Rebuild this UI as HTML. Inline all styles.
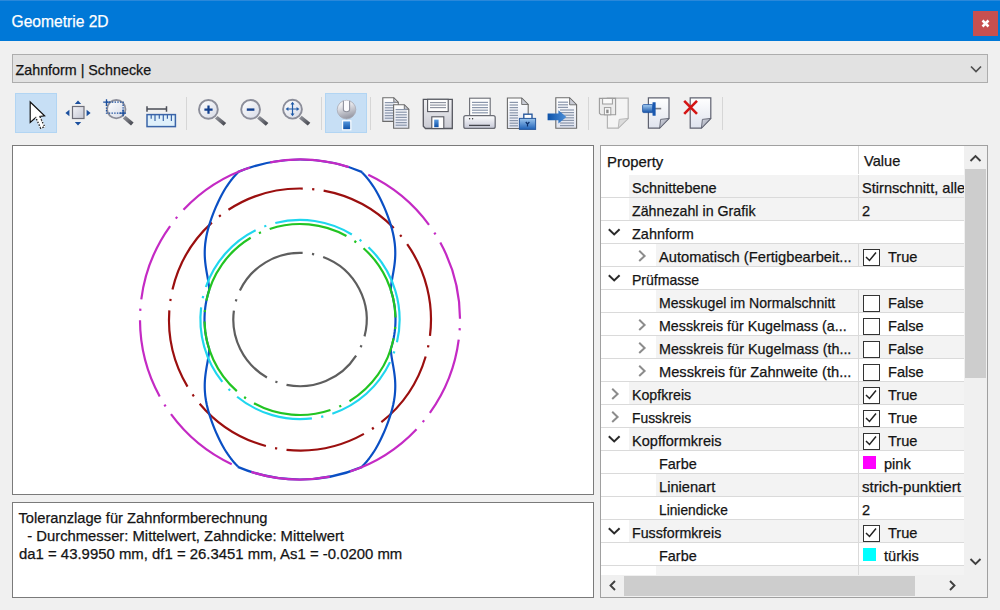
<!DOCTYPE html>
<html><head><meta charset="utf-8">
<style>
*{margin:0;padding:0;box-sizing:border-box}
html,body{width:1000px;height:610px;overflow:hidden;background:#f0f0f0;font-family:"Liberation Sans", sans-serif;font-size:14.6px;color:#141414;position:relative}
.abs{position:absolute}
.t{position:absolute;white-space:nowrap;line-height:17px;-webkit-text-stroke:0.25px currentColor}
.shd{position:absolute}
.hl{position:absolute;height:1px;background:#dadada}
.vl{position:absolute;width:1px;background:#dadada}
</style></head><body>
<div class="abs" style="left:0;top:0;width:1000px;height:41px;background:#0078d7;border-top:1px solid #2a88da"></div>
<div class="t" style="left:11.5px;top:12px;color:#fff;font-size:15.6px;line-height:19px">Geometrie 2D</div>
<div class="abs" style="left:973px;top:11px;width:25px;height:25px;background:#c75050"></div>
<svg class="abs" style="left:973px;top:11px" width="25" height="25"><path d="M9.5,9.5 L15.5,15.5 M15.5,9.5 L9.5,15.5" stroke="#fff" stroke-width="2.5"/></svg>

<div class="abs" style="left:12px;top:54px;width:976px;height:29px;background:#e2e2e2;border:1px solid #adadad"></div>
<div class="t" style="left:15.5px;top:61.5px;font-size:14.3px">Zahnform | Schnecke</div>
<svg class="abs" style="left:969.5px;top:64.5px" width="13" height="9"><path d="M1,1.5 L6,6.5 L11,1.5" stroke="#505050" stroke-width="1.7" fill="none"/></svg>

<svg width="1000" height="140" viewBox="0 0 1000 140" style="position:absolute;left:0;top:0"><defs>
<linearGradient id="docg" x1="0" y1="0" x2="0" y2="1"><stop offset="0" stop-color="#ffffff"/><stop offset="1" stop-color="#dfe3ee"/></linearGradient>
<linearGradient id="lens" x1="0" y1="0" x2="1" y2="1"><stop offset="0" stop-color="#ffffff"/><stop offset="1" stop-color="#d6dae6"/></linearGradient>
<linearGradient id="graybox" x1="0" y1="0" x2="1" y2="1"><stop offset="0" stop-color="#f4f4f8"/><stop offset="1" stop-color="#c4c6d2"/></linearGradient>
<linearGradient id="handle" x1="0" y1="0" x2="1" y2="1"><stop offset="0" stop-color="#9a9ca4"/><stop offset="1" stop-color="#3c3e46"/></linearGradient>
<linearGradient id="blueg" x1="0" y1="0" x2="0" y2="1"><stop offset="0" stop-color="#5a9be0"/><stop offset="1" stop-color="#0b4ea6"/></linearGradient>
<linearGradient id="blueh" x1="0" y1="0" x2="1" y2="0"><stop offset="0" stop-color="#0d52a8"/><stop offset="1" stop-color="#4d8fd8"/></linearGradient>
<linearGradient id="magg" x1="0.2" y1="0" x2="0.5" y2="1"><stop offset="0" stop-color="#ffffff"/><stop offset="0.35" stop-color="#e2e3e8"/><stop offset="1" stop-color="#9496a2"/></linearGradient>
<linearGradient id="floppy" x1="0" y1="0" x2="0" y2="1"><stop offset="0" stop-color="#f2f2f4"/><stop offset="1" stop-color="#c9cad3"/></linearGradient>
<linearGradient id="printer" x1="0" y1="0" x2="0" y2="1"><stop offset="0" stop-color="#ffffff"/><stop offset="1" stop-color="#c5c7d6"/></linearGradient>
<linearGradient id="curlg" x1="0" y1="0" x2="1" y2="1"><stop offset="0" stop-color="#d8dbe4"/><stop offset="1" stop-color="#8d91a0"/></linearGradient><linearGradient id="lockg" x1="0" y1="0" x2="0" y2="1"><stop offset="0" stop-color="#9cc6ee"/><stop offset="1" stop-color="#1f62b8"/></linearGradient><linearGradient id="ping" x1="0" y1="0" x2="0" y2="1"><stop offset="0" stop-color="#a8d0f4"/><stop offset="1" stop-color="#1452a8"/></linearGradient></defs><rect x="15.5" y="93.5" width="41" height="39" fill="#c7dff5" stroke="#b2d5f3" stroke-width="1"/><rect x="325.5" y="93.5" width="41" height="39" fill="#c7dff5" stroke="#b2d5f3" stroke-width="1"/><line x1="186.5" y1="97" x2="186.5" y2="130" stroke="#d6d6d6" stroke-width="1"/><line x1="321.5" y1="97" x2="321.5" y2="130" stroke="#d6d6d6" stroke-width="1"/><line x1="370.5" y1="97" x2="370.5" y2="130" stroke="#d6d6d6" stroke-width="1"/><line x1="588.5" y1="97" x2="588.5" y2="130" stroke="#d6d6d6" stroke-width="1"/><line x1="722.5" y1="97" x2="722.5" y2="130" stroke="#d6d6d6" stroke-width="1"/><path d="M30.2,102 L30.2,122.5 L35.8,117.6 L40.6,128.2 L44.6,126.6 L39.8,116.4 L44.6,115.8 Z" fill="#fff" stroke="#111" stroke-width="1.2" stroke-linejoin="miter"/><path d="M35.8,117.6 L40.6,128.2 L44.6,126.6 L39.8,116.4" fill="none" stroke="#fff" stroke-width="1.5" stroke-dasharray="1.5,1.5"/><rect x="72.5" y="106.5" width="11.5" height="12" fill="url(#graybox)" stroke="#6e6e78" stroke-width="1.2"/><path d="M74.8,104 L78,100.6 L81.2,104 Z M74.8,122 L78,125.6 L81.2,122 Z M69.4,109.8 L65.4,113 L69.4,116.2 Z M86.6,109.8 L90.6,113 L86.6,116.2 Z" fill="#1b4f9e"/><path d="M122.8,118.4 L125.5,115.7 L133.6,122.6 L131,125.4 Z" fill="url(#handle)"/><circle cx="116.3" cy="109.2" r="9.2" fill="url(#lens)" stroke="#8c8e9a" stroke-width="1.8"/><rect x="106.5" y="102.2" width="16.6" height="11" fill="none" stroke="#1b4f9e" stroke-width="1.3" stroke-dasharray="1.4,1.3"/><path d="M103.2,102.2 L110,102.2 M106.5,99.2 L106.5,106 M119.5,113.2 L126,113.2 M123.1,109.5 L123.1,116.2" stroke="#1b4f9e" stroke-width="1.3"/><path d="M147,109 L166.5,109 M147,106.2 L147,111.8 M166.5,106.2 L166.5,111.8" stroke="#4a4c56" stroke-width="1.5"/><rect x="147" y="114.6" width="28.4" height="12" fill="#dff0fb" stroke="#3a64a8" stroke-width="1.5"/><line x1="151.2" y1="115" x2="151.2" y2="118.8" stroke="#3a64a8" stroke-width="1.2"/><line x1="155" y1="115" x2="155" y2="121" stroke="#3a64a8" stroke-width="1.2"/><line x1="159.3" y1="115" x2="159.3" y2="118.8" stroke="#3a64a8" stroke-width="1.2"/><line x1="163.3" y1="115" x2="163.3" y2="121" stroke="#3a64a8" stroke-width="1.2"/><line x1="167.4" y1="115" x2="167.4" y2="118.8" stroke="#3a64a8" stroke-width="1.2"/><line x1="171.4" y1="115" x2="171.4" y2="121" stroke="#3a64a8" stroke-width="1.2"/><path d="M214.9,118.60000000000001 L217.6,115.9 L226.20000000000002,123.0 L223.6,125.80000000000001 Z" fill="url(#handle)"/><circle cx="208.4" cy="109.4" r="9.4" fill="url(#lens)" stroke="#8c8e9a" stroke-width="1.9"/><path d="M204.4,109.6 L212.6,109.6 M208.5,105.5 L208.5,113.7" stroke="#123f8e" stroke-width="2.2"/><path d="M257.1,118.60000000000001 L259.8,115.9 L268.4,123.0 L265.8,125.80000000000001 Z" fill="url(#handle)"/><circle cx="250.6" cy="109.4" r="9.4" fill="url(#lens)" stroke="#8c8e9a" stroke-width="1.9"/><path d="M246.8,109.6 L254.4,109.6" stroke="#123f8e" stroke-width="2.4"/><path d="M299.0,118.4 L301.7,115.7 L310.3,122.8 L307.7,125.6 Z" fill="url(#handle)"/><circle cx="292.5" cy="109.2" r="9.4" fill="url(#lens)" stroke="#8c8e9a" stroke-width="1.9"/><path d="M287,109 L298,109 M292.5,103.5 L292.5,114.5" stroke="#1f5aa8" stroke-width="1.2"/><path d="M285.6,109 L288.4,107 L288.4,111 Z M299.4,109 L296.6,107 L296.6,111 Z M292.5,101.8 L290.5,104.6 L294.5,104.6 Z M292.5,116.2 L290.5,113.4 L294.5,113.4 Z" fill="#1f5aa8"/><circle cx="346.5" cy="109.6" r="9.3" fill="url(#magg)" stroke="#a8aab4" stroke-width="0.8"/><path d="M343.4,100.8 L343.4,109.6 Q343.4,111.8 346.5,111.8 Q349.6,111.8 349.6,109.6 L349.6,100.8" fill="#fbfbfd" stroke="#8e909c" stroke-width="1.1"/><rect x="342.6" y="120.8" width="8.2" height="9" fill="url(#blueg)" stroke="#fff" stroke-width="1.2"/><path d="M382.8,97.8 L393.8,97.8 L398.3,102.3 L398.3,121.4 L382.8,121.4 Z" fill="url(#docg)" stroke="#6b6b6b" stroke-width="1.1"/><path d="M393.8,97.8 L393.8,102.3 L398.3,102.3 Z" fill="#c9ccd6" stroke="#6b6b6b" stroke-width="0.9"/><line x1="384.8" y1="102.6" x2="394.5" y2="102.6" stroke="#8a96ab" stroke-width="1.2"/><line x1="384.8" y1="105.2" x2="394.5" y2="105.2" stroke="#8a96ab" stroke-width="1.2"/><line x1="384.8" y1="107.8" x2="394.5" y2="107.8" stroke="#8a96ab" stroke-width="1.2"/><line x1="384.8" y1="110.4" x2="394.5" y2="110.4" stroke="#8a96ab" stroke-width="1.2"/><line x1="384.8" y1="113" x2="394.5" y2="113" stroke="#8a96ab" stroke-width="1.2"/><line x1="384.8" y1="115.6" x2="394.5" y2="115.6" stroke="#8a96ab" stroke-width="1.2"/><line x1="384.8" y1="118.2" x2="394.5" y2="118.2" stroke="#8a96ab" stroke-width="1.2"/><path d="M393.6,104.8 L404.3,104.8 L408.8,109.3 L408.8,128.2 L393.6,128.2 Z" fill="url(#docg)" stroke="#6b6b6b" stroke-width="1.1"/><path d="M404.3,104.8 L404.3,109.3 L408.8,109.3 Z" fill="#c9ccd6" stroke="#6b6b6b" stroke-width="0.9"/><line x1="395.6" y1="109.6" x2="406.8" y2="109.6" stroke="#8a96ab" stroke-width="1.2"/><line x1="395.6" y1="112.2" x2="406.8" y2="112.2" stroke="#8a96ab" stroke-width="1.2"/><line x1="395.6" y1="114.8" x2="406.8" y2="114.8" stroke="#8a96ab" stroke-width="1.2"/><line x1="395.6" y1="117.4" x2="406.8" y2="117.4" stroke="#8a96ab" stroke-width="1.2"/><line x1="395.6" y1="120" x2="406.8" y2="120" stroke="#8a96ab" stroke-width="1.2"/><line x1="395.6" y1="122.6" x2="406.8" y2="122.6" stroke="#8a96ab" stroke-width="1.2"/><line x1="395.6" y1="125.2" x2="406.8" y2="125.2" stroke="#8a96ab" stroke-width="1.2"/><path d="M423.3,99.3 L452.3,99.3 L452.3,128.5 L425.5,128.5 L423.3,126.3 Z" fill="url(#floppy)" stroke="#55575f" stroke-width="1.3"/><rect x="427.6" y="99.3" width="20.6" height="12.3" fill="#fdfdfd" stroke="#55575f" stroke-width="1.1"/><line x1="430" y1="102.6" x2="446" y2="102.6" stroke="#8a8f9c" stroke-width="1.1"/><line x1="430" y1="105.1" x2="446" y2="105.1" stroke="#8a8f9c" stroke-width="1.1"/><line x1="430" y1="107.6" x2="446" y2="107.6" stroke="#8a8f9c" stroke-width="1.1"/><rect x="431.8" y="116.8" width="12" height="11.7" fill="#fdfdfd" stroke="#55575f" stroke-width="1.1"/><rect x="434.2" y="119.6" width="4.4" height="7.6" fill="url(#blueg)"/><rect x="469.6" y="98.2" width="20.6" height="18" fill="#fdfdfd" stroke="#6b6d75" stroke-width="1.1"/><line x1="472" y1="102.4" x2="488" y2="102.4" stroke="#8a96ab" stroke-width="1.2"/><line x1="472" y1="105" x2="488" y2="105" stroke="#8a96ab" stroke-width="1.2"/><line x1="472" y1="107.6" x2="488" y2="107.6" stroke="#8a96ab" stroke-width="1.2"/><line x1="472" y1="110.2" x2="488" y2="110.2" stroke="#8a96ab" stroke-width="1.2"/><line x1="472" y1="112.8" x2="488" y2="112.8" stroke="#8a96ab" stroke-width="1.2"/><rect x="463.8" y="115.6" width="31.4" height="12.8" rx="2" fill="url(#printer)" stroke="#6b6d75" stroke-width="1.3"/><path d="M469,125.4 L490,125.4" stroke="#44464e" stroke-width="1.3"/><circle cx="469.6" cy="118.8" r="0.7" fill="#333"/><circle cx="472.6" cy="118.8" r="0.7" fill="#333"/><path d="M507.4,98 L521.7,98 L528.2,104.5 L528.2,128.5 L507.4,128.5 Z" fill="url(#docg)" stroke="#6b6b6b" stroke-width="1.1"/><path d="M521.7,98 L521.7,104.5 L528.2,104.5 Z" fill="#c9ccd6" stroke="#6b6b6b" stroke-width="0.9"/><line x1="509.6" y1="102.4" x2="518" y2="102.4" stroke="#8a96ab" stroke-width="1.2"/><line x1="509.6" y1="105" x2="518" y2="105" stroke="#8a96ab" stroke-width="1.2"/><line x1="509.6" y1="107.6" x2="518" y2="107.6" stroke="#8a96ab" stroke-width="1.2"/><line x1="509.6" y1="110.2" x2="518" y2="110.2" stroke="#8a96ab" stroke-width="1.2"/><line x1="509.6" y1="112.8" x2="518" y2="112.8" stroke="#8a96ab" stroke-width="1.2"/><line x1="509.6" y1="115.4" x2="518" y2="115.4" stroke="#8a96ab" stroke-width="1.2"/><line x1="509.6" y1="118" x2="518" y2="118" stroke="#8a96ab" stroke-width="1.2"/><line x1="509.6" y1="120.6" x2="518" y2="120.6" stroke="#8a96ab" stroke-width="1.2"/><line x1="509.6" y1="123.2" x2="518" y2="123.2" stroke="#8a96ab" stroke-width="1.2"/><line x1="509.6" y1="125.8" x2="518" y2="125.8" stroke="#8a96ab" stroke-width="1.2"/><rect x="523.8" y="114.2" width="8.2" height="5" fill="#fff" stroke="#2a5a9e" stroke-width="1.4"/><rect x="519.4" y="118.4" width="16.2" height="11" fill="url(#lockg)" stroke="#2a5a9e" stroke-width="1"/><path d="M525.8,122 L527.5,124 L529.4,122 M527.5,124 L527.5,126.6" stroke="#0b2f6a" stroke-width="1.2" fill="none"/><path d="M555.8,97.8 L569.6,97.8 L576.6,104.8 L576.6,128.2 L555.8,128.2 Z" fill="url(#docg)" stroke="#6b6b6b" stroke-width="1.1"/><path d="M569.6,97.8 L569.6,104.8 L576.6,104.8 Z" fill="#c9ccd6" stroke="#6b6b6b" stroke-width="0.9"/><line x1="558" y1="102.2" x2="568" y2="102.2" stroke="#8a96ab" stroke-width="1.2"/><line x1="558" y1="104.8" x2="568" y2="104.8" stroke="#8a96ab" stroke-width="1.2"/><line x1="558" y1="107.4" x2="568" y2="107.4" stroke="#8a96ab" stroke-width="1.2"/><line x1="560" y1="110" x2="574" y2="110" stroke="#8a96ab" stroke-width="1.2"/><line x1="560" y1="112.6" x2="574" y2="112.6" stroke="#8a96ab" stroke-width="1.2"/><line x1="560" y1="115.2" x2="574" y2="115.2" stroke="#8a96ab" stroke-width="1.2"/><line x1="560" y1="117.8" x2="574" y2="117.8" stroke="#8a96ab" stroke-width="1.2"/><line x1="560" y1="120.4" x2="574" y2="120.4" stroke="#8a96ab" stroke-width="1.2"/><line x1="560" y1="123" x2="574" y2="123" stroke="#8a96ab" stroke-width="1.2"/><line x1="560" y1="125.6" x2="574" y2="125.6" stroke="#8a96ab" stroke-width="1.2"/><path d="M547.6,113.6 L558.4,113.6 L558.4,110.2 L566.4,116.9 L558.4,123.6 L558.4,120.2 L547.6,120.2 Z" fill="url(#blueh)"/><path d="M607.4,98.2 L628.2,98.2 L628.2,118.4 L618.2,128.2 L607.4,128.2 Z" fill="#f4f4f4" stroke="#b4b4b4" stroke-width="1.2"/><path d="M618.2,128.2 L628.2,118.4 L619.2,119.4 Z" fill="#dcdcdc" stroke="#b4b4b4" stroke-width="0.9" stroke-linejoin="round"/><path d="M599.4,98.4 L615.6,98.4 L615.6,114.8 L601,114.8 L599.4,113.2 Z" fill="#ececec" stroke="#9c9c9c" stroke-width="1.1"/><rect x="602.6" y="98.4" width="9.8" height="5.6" fill="#fafafa" stroke="#9c9c9c" stroke-width="1"/><rect x="604.4" y="107.6" width="6.4" height="7.2" fill="#fafafa" stroke="#9c9c9c" stroke-width="1"/><rect x="606.2" y="109.6" width="2.4" height="3.6" fill="#8c8c8c"/><path d="M648.4,97.8 L669,97.8 L669,118.4 L659.6,128.2 L648.4,128.2 Z" fill="url(#docg)" stroke="#5f6270" stroke-width="1.2"/><path d="M659.6,128.2 L669,118.4 L660.6,119.4 Z" fill="url(#curlg)" stroke="#5f6270" stroke-width="0.9" stroke-linejoin="round"/><line x1="655" y1="108.6" x2="661.2" y2="108.6" stroke="#7a7c84" stroke-width="1.6"/><rect x="642.6" y="104.6" width="10.4" height="8" rx="1" fill="url(#ping)" stroke="#1a4f9e" stroke-width="0.8"/><path d="M652.6,102.2 L655.6,102.2 L655.6,115.8 L652.6,115.8 Q651.8,108.6 652.6,102.2 Z" fill="#1a58b0"/><path d="M690.2,97.8 L710.8,97.8 L710.8,118.4 L701.4,128.2 L690.2,128.2 Z" fill="url(#docg)" stroke="#5f6270" stroke-width="1.2"/><path d="M701.4,128.2 L710.8,118.4 L702.4,119.4 Z" fill="url(#curlg)" stroke="#5f6270" stroke-width="0.9" stroke-linejoin="round"/><path d="M684.2,100.8 L697,113.8 M697,100.8 L684.2,113.8" stroke="#d41414" stroke-width="2.6"/></svg>

<div class="abs" style="left:12px;top:145px;width:582px;height:350px;background:#fff;border:1px solid #7a7a7a"></div>
<svg width="1000" height="610" viewBox="0 0 1000 610" style="position:absolute;left:0;top:0">
<path d="M425.68,356.47 A131,131 0 0 1 381.36,422.17" stroke="#9b0f0f" stroke-width="2.2" fill="none"/>
<path d="M428.45,345.21 A131,131 0 0 1 428.00,347.36" stroke="#9b0f0f" stroke-width="2.2" fill="none"/>
<path d="M363.92,433.84 A131,131 0 0 1 286.52,449.80" stroke="#9b0f0f" stroke-width="2.2" fill="none"/>
<path d="M373.79,427.74 A131,131 0 0 1 371.96,428.97" stroke="#9b0f0f" stroke-width="2.2" fill="none"/>
<path d="M265.89,445.98 A131,131 0 0 1 199.64,403.69" stroke="#9b0f0f" stroke-width="2.2" fill="none"/>
<path d="M277.21,448.50 A131,131 0 0 1 275.05,448.10" stroke="#9b0f0f" stroke-width="2.2" fill="none"/>
<path d="M187.49,386.59 A131,131 0 0 1 169.32,310.34" stroke="#9b0f0f" stroke-width="2.2" fill="none"/>
<path d="M193.86,396.28 A131,131 0 0 1 192.58,394.49" stroke="#9b0f0f" stroke-width="2.2" fill="none"/>
<path d="M172.46,289.60 A131,131 0 0 1 211.85,222.60" stroke="#9b0f0f" stroke-width="2.2" fill="none"/>
<path d="M170.31,301.00 A131,131 0 0 1 170.64,298.82" stroke="#9b0f0f" stroke-width="2.2" fill="none"/>
<path d="M228.45,209.77 A131,131 0 0 1 302.76,188.53" stroke="#9b0f0f" stroke-width="2.2" fill="none"/>
<path d="M219.02,216.53 A131,131 0 0 1 220.76,215.18" stroke="#9b0f0f" stroke-width="2.2" fill="none"/>
<path d="M323.63,190.65 A131,131 0 0 1 393.77,228.02" stroke="#9b0f0f" stroke-width="2.2" fill="none"/>
<path d="M312.14,189.06 A131,131 0 0 1 314.33,189.29" stroke="#9b0f0f" stroke-width="2.2" fill="none"/>
<path d="M407.17,244.16 A131,131 0 0 1 429.96,335.94" stroke="#9b0f0f" stroke-width="2.2" fill="none"/>
<path d="M400.09,234.98 A131,131 0 0 1 401.49,236.67" stroke="#9b0f0f" stroke-width="2.2" fill="none"/>
<path d="M237.92,172.60 L235.97,174.59 L234.14,176.58 L232.44,178.57 L230.85,180.56 L229.35,182.55 L227.94,184.54 L226.61,186.53 L225.35,188.52 L224.15,190.51 L223.01,192.50 L221.91,194.49 L220.86,196.48 L219.85,198.47 L218.88,200.46 L217.94,202.45 L217.03,204.44 L216.15,206.43 L215.29,208.42 L214.47,210.41 L213.67,212.40 L212.90,214.39 L212.15,216.38 L211.43,218.37 L210.74,220.36 L210.08,222.35 L209.44,224.34 L208.84,226.33 L208.28,228.32 L207.75,230.31 L207.26,232.29 L206.80,234.28 L206.39,236.27 L206.02,238.26 L205.70,240.25 L205.42,242.24 L205.18,244.23 L205.00,246.22 L204.86,248.21 L204.77,250.20 L204.73,252.19 L204.73,254.18 L204.79,256.17 L204.89,258.16 L205.03,260.15 L205.22,262.14 L205.45,264.13 L205.71,266.12 L206.00,268.11 L206.32,270.10 L206.65,272.09 L207.00,274.08 L207.36,276.07 L207.72,278.06 L208.06,280.05 L208.38,282.04 L208.67,284.03 L208.92,286.02 L209.10,288.01 L209.22,290.00 L208.29,292.86 L207.50,295.75 L206.80,298.67 L206.19,301.61 L205.68,304.56 L205.25,307.53 L204.92,310.51 L204.69,313.50 L204.55,316.50 L204.50,319.50 L204.55,322.50 L204.69,325.50 L204.92,328.49 L205.25,331.47 L205.68,334.44 L206.19,337.39 L206.80,340.33 L207.50,343.25 L208.29,346.14 L209.22,349.00 L209.10,350.99 L208.92,352.98 L208.67,354.97 L208.38,356.96 L208.06,358.95 L207.72,360.94 L207.36,362.93 L207.00,364.92 L206.65,366.91 L206.32,368.90 L206.00,370.89 L205.71,372.88 L205.45,374.87 L205.22,376.86 L205.03,378.85 L204.89,380.84 L204.79,382.83 L204.73,384.82 L204.73,386.81 L204.77,388.80 L204.86,390.79 L205.00,392.78 L205.18,394.77 L205.42,396.76 L205.70,398.75 L206.02,400.74 L206.39,402.73 L206.80,404.72 L207.26,406.71 L207.75,408.69 L208.28,410.68 L208.84,412.67 L209.44,414.66 L210.08,416.65 L210.74,418.64 L211.43,420.63 L212.15,422.62 L212.90,424.61 L213.67,426.60 L214.47,428.59 L215.29,430.58 L216.15,432.57 L217.03,434.56 L217.94,436.55 L218.88,438.54 L219.85,440.53 L220.86,442.52 L221.91,444.51 L223.01,446.50 L224.15,448.49 L225.35,450.48 L226.61,452.47 L227.94,454.46 L229.35,456.45 L230.85,458.44 L232.44,460.43 L234.14,462.42 L235.97,464.41 L237.92,466.40" stroke="#0a4fc4" stroke-width="2.2" fill="none" stroke-linejoin="round"/>
<path d="M362.08,172.60 L364.03,174.59 L365.86,176.58 L367.56,178.57 L369.15,180.56 L370.65,182.55 L372.06,184.54 L373.39,186.53 L374.65,188.52 L375.85,190.51 L376.99,192.50 L378.09,194.49 L379.14,196.48 L380.15,198.47 L381.12,200.46 L382.06,202.45 L382.97,204.44 L383.85,206.43 L384.71,208.42 L385.53,210.41 L386.33,212.40 L387.10,214.39 L387.85,216.38 L388.57,218.37 L389.26,220.36 L389.92,222.35 L390.56,224.34 L391.16,226.33 L391.72,228.32 L392.25,230.31 L392.74,232.29 L393.20,234.28 L393.61,236.27 L393.98,238.26 L394.30,240.25 L394.58,242.24 L394.82,244.23 L395.00,246.22 L395.14,248.21 L395.23,250.20 L395.27,252.19 L395.27,254.18 L395.21,256.17 L395.11,258.16 L394.97,260.15 L394.78,262.14 L394.55,264.13 L394.29,266.12 L394.00,268.11 L393.68,270.10 L393.35,272.09 L393.00,274.08 L392.64,276.07 L392.28,278.06 L391.94,280.05 L391.62,282.04 L391.33,284.03 L391.08,286.02 L390.90,288.01 L390.78,290.00 L391.71,292.86 L392.50,295.75 L393.20,298.67 L393.81,301.61 L394.32,304.56 L394.75,307.53 L395.08,310.51 L395.31,313.50 L395.45,316.50 L395.50,319.50 L395.45,322.50 L395.31,325.50 L395.08,328.49 L394.75,331.47 L394.32,334.44 L393.81,337.39 L393.20,340.33 L392.50,343.25 L391.71,346.14 L390.78,349.00 L390.90,350.99 L391.08,352.98 L391.33,354.97 L391.62,356.96 L391.94,358.95 L392.28,360.94 L392.64,362.93 L393.00,364.92 L393.35,366.91 L393.68,368.90 L394.00,370.89 L394.29,372.88 L394.55,374.87 L394.78,376.86 L394.97,378.85 L395.11,380.84 L395.21,382.83 L395.27,384.82 L395.27,386.81 L395.23,388.80 L395.14,390.79 L395.00,392.78 L394.82,394.77 L394.58,396.76 L394.30,398.75 L393.98,400.74 L393.61,402.73 L393.20,404.72 L392.74,406.71 L392.25,408.69 L391.72,410.68 L391.16,412.67 L390.56,414.66 L389.92,416.65 L389.26,418.64 L388.57,420.63 L387.85,422.62 L387.10,424.61 L386.33,426.60 L385.53,428.59 L384.71,430.58 L383.85,432.57 L382.97,434.56 L382.06,436.55 L381.12,438.54 L380.15,440.53 L379.14,442.52 L378.09,444.51 L376.99,446.50 L375.85,448.49 L374.65,450.48 L373.39,452.47 L372.06,454.46 L370.65,456.45 L369.15,458.44 L367.56,460.43 L365.86,462.42 L364.03,464.41 L362.08,466.40" stroke="#0a4fc4" stroke-width="2.2" fill="none" stroke-linejoin="round"/>
<path d="M237.72,172.12 A160,160 0 0 1 362.28,172.12" stroke="#0a4fc4" stroke-width="2.2" fill="none"/>
<path d="M362.28,466.88 A160,160 0 0 1 237.72,466.88" stroke="#0a4fc4" stroke-width="2.2" fill="none"/>
<path d="M390.02,362.13 A99.6,99.6 0 0 1 332.33,413.71" stroke="#1fd6ee" stroke-width="2.2" fill="none"/>
<path d="M394.36,351.38 A99.6,99.6 0 0 1 393.63,353.46" stroke="#1fd6ee" stroke-width="2.2" fill="none"/>
<path d="M311.90,418.39 A99.6,99.6 0 0 1 237.10,396.73" stroke="#1fd6ee" stroke-width="2.2" fill="none"/>
<path d="M323.31,416.33 A99.6,99.6 0 0 1 321.16,416.83" stroke="#1fd6ee" stroke-width="2.2" fill="none"/>
<path d="M222.33,381.86 A99.6,99.6 0 0 1 201.13,307.43" stroke="#1fd6ee" stroke-width="2.2" fill="none"/>
<path d="M230.11,390.46 A99.6,99.6 0 0 1 228.56,388.90" stroke="#1fd6ee" stroke-width="2.2" fill="none"/>
<path d="M205.85,287.01 A99.6,99.6 0 0 1 255.65,230.32" stroke="#1fd6ee" stroke-width="2.2" fill="none"/>
<path d="M202.71,298.17 A99.6,99.6 0 0 1 203.21,296.02" stroke="#1fd6ee" stroke-width="2.2" fill="none"/>
<path d="M275.30,223.01 A99.6,99.6 0 0 1 351.83,234.45" stroke="#1fd6ee" stroke-width="2.2" fill="none"/>
<path d="M264.25,226.54 A99.6,99.6 0 0 1 266.32,225.77" stroke="#1fd6ee" stroke-width="2.2" fill="none"/>
<path d="M368.48,247.18 A99.6,99.6 0 0 1 396.94,342.34" stroke="#1fd6ee" stroke-width="2.2" fill="none"/>
<path d="M359.62,239.71 A99.6,99.6 0 0 1 361.36,241.05" stroke="#1fd6ee" stroke-width="2.2" fill="none"/>
<path d="M393.62,338.38 A95.5,95.5 0 0 1 349.47,401.19" stroke="#22c422" stroke-width="2.2" fill="none"/>
<path d="M395.21,326.89 A95.5,95.5 0 0 1 395.02,329.08" stroke="#22c422" stroke-width="2.2" fill="none"/>
<path d="M330.46,410.01 A95.5,95.5 0 0 1 253.99,403.19" stroke="#22c422" stroke-width="2.2" fill="none"/>
<path d="M341.20,405.65 A95.5,95.5 0 0 1 339.21,406.58" stroke="#22c422" stroke-width="2.2" fill="none"/>
<path d="M236.85,391.14 A95.5,95.5 0 0 1 204.52,321.50" stroke="#22c422" stroke-width="2.2" fill="none"/>
<path d="M245.99,398.26 A95.5,95.5 0 0 1 244.19,397.00" stroke="#22c422" stroke-width="2.2" fill="none"/>
<path d="M206.38,300.62 A95.5,95.5 0 0 1 250.67,237.73" stroke="#22c422" stroke-width="2.2" fill="none"/>
<path d="M204.79,312.11 A95.5,95.5 0 0 1 204.98,309.92" stroke="#22c422" stroke-width="2.2" fill="none"/>
<path d="M269.70,228.94 A95.5,95.5 0 0 1 346.45,236.06" stroke="#22c422" stroke-width="2.2" fill="none"/>
<path d="M258.95,233.27 A95.5,95.5 0 0 1 260.94,232.35" stroke="#22c422" stroke-width="2.2" fill="none"/>
<path d="M363.53,248.20 A95.5,95.5 0 0 1 395.48,317.50" stroke="#22c422" stroke-width="2.2" fill="none"/>
<path d="M354.42,241.02 A95.5,95.5 0 0 1 356.21,242.30" stroke="#22c422" stroke-width="2.2" fill="none"/>
<path d="M356.12,355.55 A66.7,66.7 0 0 1 286.50,384.82" stroke="#5e5e5e" stroke-width="2.2" fill="none"/>
<path d="M361.51,345.30 A66.7,66.7 0 0 1 360.62,347.31" stroke="#5e5e5e" stroke-width="2.2" fill="none"/>
<path d="M266.93,377.43 A66.7,66.7 0 0 1 233.90,310.59" stroke="#5e5e5e" stroke-width="2.2" fill="none"/>
<path d="M277.46,382.27 A66.7,66.7 0 0 1 275.40,381.50" stroke="#5e5e5e" stroke-width="2.2" fill="none"/>
<path d="M239.91,290.55 A66.7,66.7 0 0 1 302.65,252.85" stroke="#5e5e5e" stroke-width="2.2" fill="none"/>
<path d="M235.81,301.39 A66.7,66.7 0 0 1 236.44,299.28" stroke="#5e5e5e" stroke-width="2.2" fill="none"/>
<path d="M323.16,256.95 A66.7,66.7 0 0 1 364.52,336.40" stroke="#5e5e5e" stroke-width="2.2" fill="none"/>
<path d="M311.99,253.89 A66.7,66.7 0 0 1 314.15,254.32" stroke="#5e5e5e" stroke-width="2.2" fill="none"/>
<path d="M458.72,339.72 A160,160 0 0 1 429.87,412.96" stroke="#c42ac4" stroke-width="2.2" fill="none"/>
<path d="M459.76,328.17 A160,160 0 0 1 459.63,330.37" stroke="#c42ac4" stroke-width="2.2" fill="none"/>
<path d="M416.52,429.15 A160,160 0 0 1 350.13,471.44" stroke="#c42ac4" stroke-width="2.2" fill="none"/>
<path d="M424.16,420.42 A160,160 0 0 1 422.76,422.12" stroke="#c42ac4" stroke-width="2.2" fill="none"/>
<path d="M329.82,476.70 A160,160 0 0 1 251.25,471.89" stroke="#c42ac4" stroke-width="2.2" fill="none"/>
<path d="M231.72,464.20 A160,160 0 0 1 170.99,414.13" stroke="#c42ac4" stroke-width="2.2" fill="none"/>
<path d="M159.71,396.43 A160,160 0 0 1 140.00,320.23" stroke="#c42ac4" stroke-width="2.2" fill="none"/>
<path d="M165.65,406.39 A160,160 0 0 1 164.47,404.54" stroke="#c42ac4" stroke-width="2.2" fill="none"/>
<path d="M141.28,299.28 A160,160 0 0 1 170.13,226.04" stroke="#c42ac4" stroke-width="2.2" fill="none"/>
<path d="M140.24,310.83 A160,160 0 0 1 140.37,308.63" stroke="#c42ac4" stroke-width="2.2" fill="none"/>
<path d="M183.48,209.85 A160,160 0 0 1 249.87,167.56" stroke="#c42ac4" stroke-width="2.2" fill="none"/>
<path d="M175.84,218.58 A160,160 0 0 1 177.24,216.88" stroke="#c42ac4" stroke-width="2.2" fill="none"/>
<path d="M270.18,162.30 A160,160 0 0 1 348.75,167.11" stroke="#c42ac4" stroke-width="2.2" fill="none"/>
<path d="M368.28,174.80 A160,160 0 0 1 429.01,224.87" stroke="#c42ac4" stroke-width="2.2" fill="none"/>
<path d="M440.29,242.57 A160,160 0 0 1 460.00,318.77" stroke="#c42ac4" stroke-width="2.2" fill="none"/>
<path d="M434.35,232.61 A160,160 0 0 1 435.53,234.46" stroke="#c42ac4" stroke-width="2.2" fill="none"/>
</svg>
<div class="abs" style="left:12px;top:502px;width:582px;height:96px;background:#fff;border:1px solid #7a7a7a"></div>
<div class="t" style="left:18.5px;top:510px;font-size:14.7px">Toleranzlage für Zahnformberechnung</div>
<div class="t" style="left:18.5px;top:527.5px;font-size:14.7px;transform:scaleX(1.008);transform-origin:0 0">&nbsp;&nbsp;- Durchmesser: Mittelwert, Zahndicke: Mittelwert</div>
<div class="t" style="left:18.5px;top:545.5px;font-size:14.7px;transform:scaleX(1.015);transform-origin:0 0">da1 = 43.9950 mm, df1 = 26.3451 mm, As1 = -0.0200 mm</div>

<div class="abs" style="left:600px;top:145px;width:388px;height:453px;background:#fff;border:1px solid #a0a0a0;overflow:hidden">
</div>
<div class="t" style="left:606.5px;top:153.5px;transform:scaleX(1.02);transform-origin:0 0">Property</div>
<div class="vl" style="left:858px;top:146px;height:28px"></div>
<div class="t" style="left:864px;top:153px">Value</div>
<div class="abs" style="left:601px;top:146px;width:386px;height:451px;overflow:hidden">
<div style="position:relative;left:-601px;top:-146px;width:1000px;height:610px">
<div class="shd" style="left:629px;top:175px;width:229px;height:23px;background:#f3f3f3"></div>
<div class="shd" style="left:859px;top:175px;width:105px;height:23px;background:#f3f3f3"></div>
<div class="vl" style="left:858px;top:175px;height:23px"></div>
<div class="hl" style="left:601px;top:197px;width:363px"></div>
<div class="t" style="left:632px;top:180px;transform:scaleX(0.994);transform-origin:0 0">Schnittebene</div>
<div class="t" style="left:862px;top:180px">Stirnschnitt, alle</div>
<div class="shd" style="left:629px;top:198px;width:229px;height:23px;background:#f3f3f3"></div>
<div class="shd" style="left:859px;top:198px;width:105px;height:23px;background:#f3f3f3"></div>
<div class="vl" style="left:858px;top:198px;height:23px"></div>
<div class="hl" style="left:601px;top:220px;width:363px"></div>
<div class="t" style="left:632px;top:203px;transform:scaleX(0.976);transform-origin:0 0">Zähnezahl in Grafik</div>
<div class="t" style="left:862px;top:203px">2</div>
<div class="hl" style="left:601px;top:243px;width:363px"></div>
<svg style="position:absolute;left:608px;top:227.5px" width="13" height="9"><path d="M0.8,1.2 L6.2,6.4 L11.6,1.2" stroke="#2a2a2a" stroke-width="2" fill="none"/></svg>
<div class="t" style="left:632px;top:226px;transform:scaleX(0.991);transform-origin:0 0">Zahnform</div>
<div class="shd" style="left:656px;top:244px;width:202px;height:23px;background:#f3f3f3"></div>
<div class="shd" style="left:859px;top:244px;width:105px;height:23px;background:#f3f3f3"></div>
<div class="vl" style="left:858px;top:244px;height:23px"></div>
<div class="hl" style="left:601px;top:266px;width:363px"></div>
<svg style="position:absolute;left:638px;top:249.5px" width="9" height="13"><path d="M1.2,0.8 L6.6,5.9 L1.2,11" stroke="#8c8c8c" stroke-width="2" fill="none"/></svg>
<div class="t" style="left:659px;top:249px;transform:scaleX(1.006);transform-origin:0 0">Automatisch (Fertigbearbeit...</div>
<svg style="position:absolute;left:863px;top:249px" width="17" height="17"><rect x="0.5" y="0.5" width="16" height="16" fill="#fff" stroke="#333" stroke-width="1"/><path d="M3,8 L6.5,11.5 L13,3.5" stroke="#222" stroke-width="1.5" fill="none"/></svg>
<div class="t" style="left:888px;top:249px">True</div>
<div class="hl" style="left:601px;top:289px;width:363px"></div>
<svg style="position:absolute;left:608px;top:273.5px" width="13" height="9"><path d="M0.8,1.2 L6.2,6.4 L11.6,1.2" stroke="#2a2a2a" stroke-width="2" fill="none"/></svg>
<div class="t" style="left:632px;top:272px;transform:scaleX(0.963);transform-origin:0 0">Prüfmasse</div>
<div class="shd" style="left:656px;top:290px;width:202px;height:23px;background:#f3f3f3"></div>
<div class="shd" style="left:859px;top:290px;width:105px;height:23px;background:#f3f3f3"></div>
<div class="vl" style="left:858px;top:290px;height:23px"></div>
<div class="hl" style="left:601px;top:312px;width:363px"></div>
<div class="t" style="left:659px;top:295px;transform:scaleX(0.966);transform-origin:0 0">Messkugel im Normalschnitt</div>
<svg style="position:absolute;left:863px;top:295px" width="17" height="17"><rect x="0.5" y="0.5" width="16" height="16" fill="#fff" stroke="#333" stroke-width="1"/></svg>
<div class="t" style="left:888px;top:295px">False</div>
<div class="shd" style="left:656px;top:313px;width:202px;height:23px;background:#fff"></div>
<div class="shd" style="left:859px;top:313px;width:105px;height:23px;background:#fff"></div>
<div class="vl" style="left:858px;top:313px;height:23px"></div>
<div class="hl" style="left:601px;top:335px;width:363px"></div>
<svg style="position:absolute;left:638px;top:318.5px" width="9" height="13"><path d="M1.2,0.8 L6.6,5.9 L1.2,11" stroke="#8c8c8c" stroke-width="2" fill="none"/></svg>
<div class="t" style="left:659px;top:318px;transform:scaleX(0.976);transform-origin:0 0">Messkreis für Kugelmass (a...</div>
<svg style="position:absolute;left:863px;top:318px" width="17" height="17"><rect x="0.5" y="0.5" width="16" height="16" fill="#fff" stroke="#333" stroke-width="1"/></svg>
<div class="t" style="left:888px;top:318px">False</div>
<div class="shd" style="left:656px;top:336px;width:202px;height:23px;background:#f3f3f3"></div>
<div class="shd" style="left:859px;top:336px;width:105px;height:23px;background:#f3f3f3"></div>
<div class="vl" style="left:858px;top:336px;height:23px"></div>
<div class="hl" style="left:601px;top:358px;width:363px"></div>
<svg style="position:absolute;left:638px;top:341.5px" width="9" height="13"><path d="M1.2,0.8 L6.6,5.9 L1.2,11" stroke="#8c8c8c" stroke-width="2" fill="none"/></svg>
<div class="t" style="left:659px;top:341px;transform:scaleX(0.98);transform-origin:0 0">Messkreis für Kugelmass (th...</div>
<svg style="position:absolute;left:863px;top:341px" width="17" height="17"><rect x="0.5" y="0.5" width="16" height="16" fill="#fff" stroke="#333" stroke-width="1"/></svg>
<div class="t" style="left:888px;top:341px">False</div>
<div class="shd" style="left:656px;top:359px;width:202px;height:23px;background:#fff"></div>
<div class="shd" style="left:859px;top:359px;width:105px;height:23px;background:#fff"></div>
<div class="vl" style="left:858px;top:359px;height:23px"></div>
<div class="hl" style="left:601px;top:381px;width:363px"></div>
<svg style="position:absolute;left:638px;top:364.5px" width="9" height="13"><path d="M1.2,0.8 L6.6,5.9 L1.2,11" stroke="#8c8c8c" stroke-width="2" fill="none"/></svg>
<div class="t" style="left:659px;top:364px;transform:scaleX(1.005);transform-origin:0 0">Messkreis für Zahnweite (th...</div>
<svg style="position:absolute;left:863px;top:364px" width="17" height="17"><rect x="0.5" y="0.5" width="16" height="16" fill="#fff" stroke="#333" stroke-width="1"/></svg>
<div class="t" style="left:888px;top:364px">False</div>
<div class="shd" style="left:629px;top:382px;width:229px;height:23px;background:#f3f3f3"></div>
<div class="shd" style="left:859px;top:382px;width:105px;height:23px;background:#f3f3f3"></div>
<div class="vl" style="left:858px;top:382px;height:23px"></div>
<div class="hl" style="left:601px;top:404px;width:363px"></div>
<svg style="position:absolute;left:611px;top:387.5px" width="9" height="13"><path d="M1.2,0.8 L6.6,5.9 L1.2,11" stroke="#8c8c8c" stroke-width="2" fill="none"/></svg>
<div class="t" style="left:632px;top:387px;transform:scaleX(0.973);transform-origin:0 0">Kopfkreis</div>
<svg style="position:absolute;left:863px;top:387px" width="17" height="17"><rect x="0.5" y="0.5" width="16" height="16" fill="#fff" stroke="#333" stroke-width="1"/><path d="M3,8 L6.5,11.5 L13,3.5" stroke="#222" stroke-width="1.5" fill="none"/></svg>
<div class="t" style="left:888px;top:387px">True</div>
<div class="shd" style="left:629px;top:405px;width:229px;height:23px;background:#fff"></div>
<div class="shd" style="left:859px;top:405px;width:105px;height:23px;background:#fff"></div>
<div class="vl" style="left:858px;top:405px;height:23px"></div>
<div class="hl" style="left:601px;top:427px;width:363px"></div>
<svg style="position:absolute;left:611px;top:410.5px" width="9" height="13"><path d="M1.2,0.8 L6.6,5.9 L1.2,11" stroke="#8c8c8c" stroke-width="2" fill="none"/></svg>
<div class="t" style="left:632px;top:410px;transform:scaleX(0.948);transform-origin:0 0">Fusskreis</div>
<svg style="position:absolute;left:863px;top:410px" width="17" height="17"><rect x="0.5" y="0.5" width="16" height="16" fill="#fff" stroke="#333" stroke-width="1"/><path d="M3,8 L6.5,11.5 L13,3.5" stroke="#222" stroke-width="1.5" fill="none"/></svg>
<div class="t" style="left:888px;top:410px">True</div>
<div class="shd" style="left:629px;top:428px;width:229px;height:23px;background:#f3f3f3"></div>
<div class="shd" style="left:859px;top:428px;width:105px;height:23px;background:#f3f3f3"></div>
<div class="vl" style="left:858px;top:428px;height:23px"></div>
<div class="hl" style="left:601px;top:450px;width:363px"></div>
<svg style="position:absolute;left:608px;top:434.5px" width="13" height="9"><path d="M0.8,1.2 L6.2,6.4 L11.6,1.2" stroke="#2a2a2a" stroke-width="2" fill="none"/></svg>
<div class="t" style="left:632px;top:433px;transform:scaleX(0.998);transform-origin:0 0">Kopfformkreis</div>
<svg style="position:absolute;left:863px;top:433px" width="17" height="17"><rect x="0.5" y="0.5" width="16" height="16" fill="#fff" stroke="#333" stroke-width="1"/><path d="M3,8 L6.5,11.5 L13,3.5" stroke="#222" stroke-width="1.5" fill="none"/></svg>
<div class="t" style="left:888px;top:433px">True</div>
<div class="shd" style="left:656px;top:451px;width:202px;height:23px;background:#fff"></div>
<div class="shd" style="left:859px;top:451px;width:105px;height:23px;background:#fff"></div>
<div class="vl" style="left:858px;top:451px;height:23px"></div>
<div class="hl" style="left:601px;top:473px;width:363px"></div>
<div class="t" style="left:659px;top:456px;transform:scaleX(0.989);transform-origin:0 0">Farbe</div>
<div style="position:absolute;left:863px;top:456px;width:13px;height:13px;background:#ff00ff"></div>
<div class="t" style="left:884px;top:456px">pink</div>
<div class="shd" style="left:656px;top:474px;width:202px;height:23px;background:#f3f3f3"></div>
<div class="shd" style="left:859px;top:474px;width:105px;height:23px;background:#f3f3f3"></div>
<div class="vl" style="left:858px;top:474px;height:23px"></div>
<div class="hl" style="left:601px;top:496px;width:363px"></div>
<div class="t" style="left:659px;top:479px;transform:scaleX(1.004);transform-origin:0 0">Linienart</div>
<div class="t" style="left:862px;top:479px;transform:scaleX(1.034);transform-origin:0 0">strich-punktiert</div>
<div class="shd" style="left:656px;top:497px;width:202px;height:23px;background:#fff"></div>
<div class="shd" style="left:859px;top:497px;width:105px;height:23px;background:#fff"></div>
<div class="vl" style="left:858px;top:497px;height:23px"></div>
<div class="hl" style="left:601px;top:519px;width:363px"></div>
<div class="t" style="left:659px;top:502px;transform:scaleX(0.942);transform-origin:0 0">Liniendicke</div>
<div class="t" style="left:862px;top:502px">2</div>
<div class="shd" style="left:629px;top:520px;width:229px;height:23px;background:#f3f3f3"></div>
<div class="shd" style="left:859px;top:520px;width:105px;height:23px;background:#f3f3f3"></div>
<div class="vl" style="left:858px;top:520px;height:23px"></div>
<div class="hl" style="left:601px;top:542px;width:363px"></div>
<svg style="position:absolute;left:608px;top:526.5px" width="13" height="9"><path d="M0.8,1.2 L6.2,6.4 L11.6,1.2" stroke="#2a2a2a" stroke-width="2" fill="none"/></svg>
<div class="t" style="left:632px;top:525px;transform:scaleX(0.974);transform-origin:0 0">Fussformkreis</div>
<svg style="position:absolute;left:863px;top:525px" width="17" height="17"><rect x="0.5" y="0.5" width="16" height="16" fill="#fff" stroke="#333" stroke-width="1"/><path d="M3,8 L6.5,11.5 L13,3.5" stroke="#222" stroke-width="1.5" fill="none"/></svg>
<div class="t" style="left:888px;top:525px">True</div>
<div class="shd" style="left:656px;top:543px;width:202px;height:23px;background:#fff"></div>
<div class="shd" style="left:859px;top:543px;width:105px;height:23px;background:#fff"></div>
<div class="vl" style="left:858px;top:543px;height:23px"></div>
<div class="hl" style="left:601px;top:565px;width:363px"></div>
<div class="t" style="left:659px;top:548px;transform:scaleX(0.989);transform-origin:0 0">Farbe</div>
<div style="position:absolute;left:863px;top:548px;width:13px;height:13px;background:#00ffff"></div>
<div class="t" style="left:884px;top:548px">türkis</div>
<div class="shd" style="left:656px;top:566px;width:202px;height:23px;background:#f3f3f3"></div>
<div class="shd" style="left:859px;top:566px;width:105px;height:23px;background:#f3f3f3"></div>
<div class="vl" style="left:858px;top:566px;height:23px"></div>
<div class="hl" style="left:601px;top:588px;width:363px"></div>
<div class="t" style="left:659px;top:571px"></div>
<div class="t" style="left:862px;top:571px"></div>
</div></div>
<div class="abs" style="left:964px;top:146px;width:23px;height:429px;background:#f0f0f0"></div>
<div class="abs" style="left:965px;top:169px;width:21px;height:209px;background:#cdcdcd"></div>
<svg class="abs" style="left:969px;top:154px" width="13" height="9"><path d="M1.5,7 L6.5,2 L11.5,7" stroke="#404040" stroke-width="1.9" fill="none"/></svg>
<svg class="abs" style="left:969px;top:557px" width="13" height="9"><path d="M1.5,2 L6.5,7 L11.5,2" stroke="#404040" stroke-width="1.9" fill="none"/></svg>
<div class="abs" style="left:601px;top:575px;width:386px;height:22px;background:#f0f0f0"></div>
<div class="abs" style="left:624px;top:576px;width:291px;height:20px;background:#cdcdcd"></div>
<svg class="abs" style="left:608px;top:580px" width="9" height="11"><path d="M7,1 L2.5,5.5 L7,10" stroke="#404040" stroke-width="1.9" fill="none"/></svg>
<svg class="abs" style="left:948px;top:580px" width="9" height="11"><path d="M2,1 L6.5,5.5 L2,10" stroke="#404040" stroke-width="1.9" fill="none"/></svg>
</body></html>
